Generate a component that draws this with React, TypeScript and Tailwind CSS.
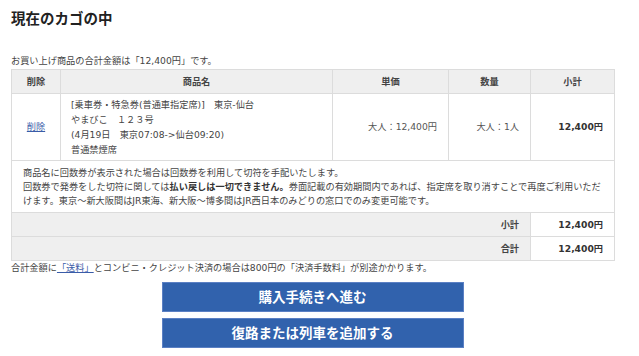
import React from 'react';

const cell = 'border border-[#dcdcdc]';

const App = () => {
  return (
    <div
      className="w-[639px] h-[356px] bg-white text-[#333] overflow-hidden"
      style={{ fontFamily: '"DejaVu Sans", "Noto Sans CJK JP", sans-serif' }}
    >
      <div className="ml-[11px] w-[603px]">
        {/* title */}
        <h1 className="pt-[9px] text-[14.5px] leading-[20px] font-bold text-[#222]">現在のカゴの中</h1>

        <p className="mt-[25px] text-[9.2px] leading-[14px] text-[#444]">
          お買い上げ商品の合計金額は「12,400円」です。
        </p>

        {/* cart table */}
        <table className="mt-px w-[603px] table-fixed border-collapse text-[9.2px]">
          <colgroup>
            <col className="w-[49px]" />
            <col className="w-[272px]" />
            <col className="w-[116px]" />
            <col className="w-[82px]" />
            <col className="w-[84px]" />
          </colgroup>
          <thead>
            <tr className="h-[24px] bg-[#efefef] text-[#444]">
              <th className={`${cell} font-bold`}>削除</th>
              <th className={`${cell} font-bold`}>商品名</th>
              <th className={`${cell} font-bold`}>単価</th>
              <th className={`${cell} font-bold`}>数量</th>
              <th className={`${cell} font-bold`}>小計</th>
            </tr>
          </thead>
          <tbody>
            <tr className="h-[67px]">
              <td className={`${cell} text-center align-middle`}>
                <a href="#" className="text-[#3a5ca8] underline">削除</a>
              </td>
              <td className={`${cell} px-[10px] align-middle leading-[15px] text-[#444]`}>
                [乗車券・特急券(普通車指定席)]　東京-仙台<br />
                やまびこ　１２３号<br />
                (4月19日　東京07:08-&gt;仙台09:20)<br />
                普通禁煙席
              </td>
              <td className={`${cell} pr-[11px] text-right align-middle text-[#555]`}>大人：12,400円</td>
              <td className={`${cell} pr-[11px] text-right align-middle text-[#555]`}>大人：1人</td>
              <td className={`${cell} pr-[11px] text-right align-middle font-bold text-[#333]`}>12,400円</td>
            </tr>
            <tr className="h-[52px]">
              <td colSpan={5} className={`${cell} px-[11px] align-middle leading-[14px] text-[#444] whitespace-nowrap`}>
                商品名に回数券が表示された場合は回数券を利用して切符を手配いたします。<br />
                回数券で発券をした切符に関しては<b className="font-bold text-[#333]">払い戻しは一切できません。</b>券面記載の有効期間内であれば、指定席を取り消すことで再度ご利用いただ<br />
                けます。東京～新大阪間はJR東海、新大阪～博多間はJR西日本のみどりの窓口でのみ変更可能です。
              </td>
            </tr>
            <tr className="h-[24px]">
              <td colSpan={4} className={`${cell} bg-[#efefef] pr-[11px] text-right font-bold text-[#444]`}>小計</td>
              <td className={`${cell} pr-[11px] text-right font-bold text-[#333]`}>12,400円</td>
            </tr>
            <tr className="h-[24px]">
              <td colSpan={4} className={`${cell} bg-[#efefef] pr-[11px] text-right font-bold text-[#444]`}>合計</td>
              <td className={`${cell} pr-[11px] text-right font-bold text-[#333]`}>12,400円</td>
            </tr>
          </tbody>
        </table>

        <p className="text-[9.2px] leading-[13px] text-[#444]">
          合計金額に<a href="#" className="text-[#3a5ca8] underline">「送料」</a>とコンビニ・クレジット決済の場合は800円の「決済手数料」が別途かかります。
        </p>

        {/* buttons */}
        <div className="mt-[8px] flex flex-col items-center gap-[6px]">
          <button className="w-[302px] h-[30px] bg-[#3162ad] border border-[#5b80c4] text-white text-[13.5px] font-bold">
            購入手続きへ進む
          </button>
          <button className="w-[302px] h-[30px] bg-[#3162ad] border border-[#5b80c4] text-white text-[13.5px] font-bold">
            復路または列車を追加する
          </button>
        </div>
      </div>
    </div>
  );
};

export default App;
